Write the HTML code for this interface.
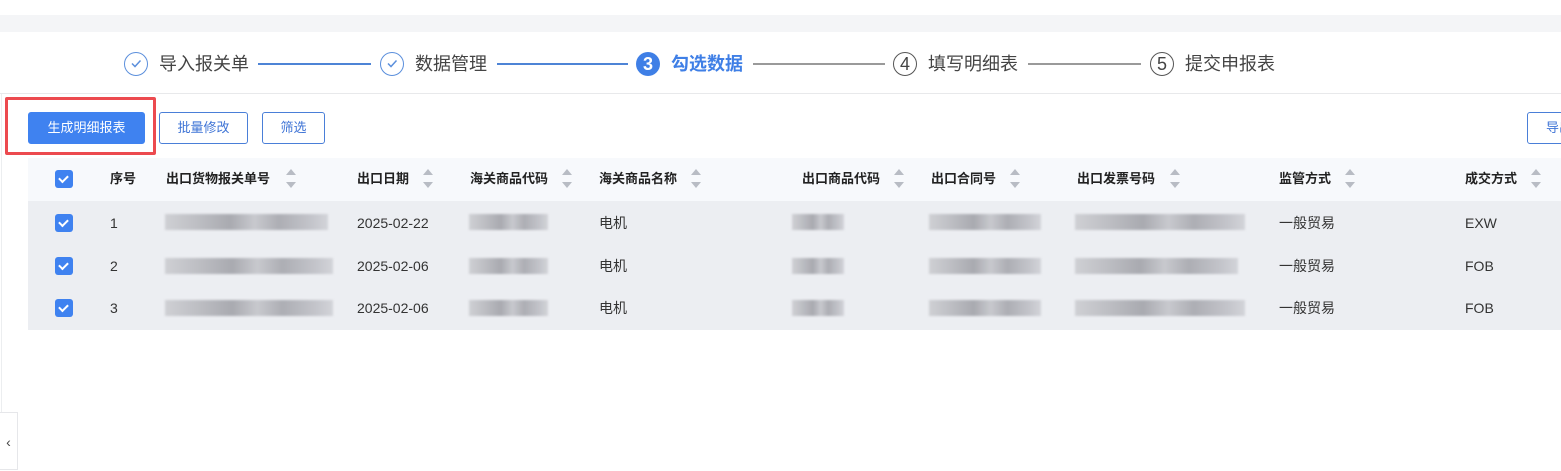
<!DOCTYPE html>
<html><head><meta charset="utf-8"><style>
*{margin:0;padding:0;box-sizing:border-box}
body{width:1561px;height:470px;background:#fff;position:relative;overflow:hidden;font-family:"Liberation Sans","Noto Sans CJK SC",sans-serif;color:#333}
.a{position:absolute}
.st{position:absolute;top:52px;font-size:18px;line-height:24px;color:#444}
.ln{position:absolute;top:63px;height:2px}
.ci{position:absolute;top:52px;width:24px;height:24px;border-radius:50%;text-align:center;font-size:18px;line-height:22px}
.btn{position:absolute;top:112px;height:32px;border:1px solid #4a7fd8;border-radius:3px;color:#3f74d6;font-size:13px;line-height:30px;text-align:center;background:#fff}
.h{position:absolute;top:171px;font-size:13px;font-weight:bold;color:#222;line-height:16px}
.so{position:absolute;top:169px;width:10px;height:20px}
.so:before{content:"";position:absolute;left:0;top:0;border:5px solid transparent;border-bottom:6px solid #b8bcc4;border-top:0}
.so:after{content:"";position:absolute;left:0;top:13px;border:5px solid transparent;border-top:6px solid #b8bcc4;border-bottom:0}
.cb{position:absolute;left:55px;width:18px;height:18px;border-radius:3px;background:#3f82f0}
.cb:after{content:"";position:absolute;width:7px;height:4px;border-left:2px solid #fff;border-bottom:2px solid #fff;transform:rotate(-45deg);top:5px;left:4px}
.c{position:absolute;font-size:14px;color:#333;line-height:18px}
.bl{position:absolute;height:16px;background:linear-gradient(90deg,#cfd0d4,#bdbec3 20%,#a9aab0 40%,#c8c9ce 55%,#adaeb4 70%,#c4c5cb 90%,#d3d4d9);filter:blur(1px)}
</style></head><body>
<div class="a" style="left:0;top:15px;width:1561px;height:17px;background:#f4f5f7"></div>
<div class="a" style="left:0;top:93px;width:1561px;height:1px;background:#e8e9eb"></div>
<div class="a" style="left:1px;top:94px;width:1px;height:318px;background:#eceef0"></div>
<div class="a" style="left:0;top:412px;width:18px;height:58px;border:1px solid #e6e7ea;border-left:0;background:#fff;font-size:14px;line-height:58px;text-align:center;color:#444">‹</div>

<div class="ci" style="left:124px;border:1.5px solid #5b8fdc"><svg width="21" height="21" viewBox="0 0 21 21"><path d="M6 10.5l3 3 5.5-6" fill="none" stroke="#5b8fdc" stroke-width="1.5"/></svg></div>
<div class="st" style="left:159px">导入报关单</div>
<div class="ln" style="left:258px;width:113px;background:#4e84d6"></div>
<div class="ci" style="left:380px;border:1.5px solid #5b8fdc"><svg width="21" height="21" viewBox="0 0 21 21"><path d="M6 10.5l3 3 5.5-6" fill="none" stroke="#5b8fdc" stroke-width="1.5"/></svg></div>
<div class="st" style="left:415px">数据管理</div>
<div class="ln" style="left:497px;width:131px;background:#4e84d6"></div>
<div class="ci" style="left:636px;background:#3f7fe6;color:#fff;font-weight:bold;line-height:24px">3</div>
<div class="st" style="left:671px;color:#3f7fe6;font-weight:bold">勾选数据</div>
<div class="ln" style="left:753px;width:132px;background:#9a9a9a"></div>
<div class="ci" style="left:893px;border:1.5px solid #555;color:#444">4</div>
<div class="st" style="left:928px">填写明细表</div>
<div class="ln" style="left:1028px;width:113px;background:#9a9a9a"></div>
<div class="ci" style="left:1150px;border:1.5px solid #555;color:#444">5</div>
<div class="st" style="left:1185px">提交申报表</div>

<div class="a" style="left:5px;top:97px;width:151px;height:58px;border:3px solid #ec4a4f;border-radius:2px"></div>
<div class="btn" style="left:28px;width:117px;background:#3f82f0;border-color:#3f82f0;color:#fff">生成明细报表</div>
<div class="btn" style="left:159px;width:89px">批量修改</div>
<div class="btn" style="left:262px;width:63px">筛选</div>
<div class="btn" style="left:1527px;width:50px;text-align:left;padding-left:18px">导出</div>

<div class="a" style="left:28px;top:158px;width:1533px;height:43px;background:#f7f9fc"></div>
<div class="a" style="left:28px;top:201px;width:1533px;height:129px;background:#eceef2"></div>
<div class="cb" style="top:170px"></div>
<div class="h" style="left:110px">序号</div>
<div class="h" style="left:166px">出口货物报关单号</div><div class="so" style="left:286px"></div>
<div class="h" style="left:357px">出口日期</div><div class="so" style="left:423px"></div>
<div class="h" style="left:470px">海关商品代码</div><div class="so" style="left:562px"></div>
<div class="h" style="left:599px">海关商品名称</div><div class="so" style="left:691px"></div>
<div class="h" style="left:802px">出口商品代码</div><div class="so" style="left:894px"></div>
<div class="h" style="left:931px">出口合同号</div><div class="so" style="left:1010px"></div>
<div class="h" style="left:1077px">出口发票号码</div><div class="so" style="left:1170px"></div>
<div class="h" style="left:1279px">监管方式</div><div class="so" style="left:1345px"></div>
<div class="h" style="left:1465px">成交方式</div><div class="so" style="left:1531px"></div>

<div class="cb" style="top:214px"></div><div class="cb" style="top:257px"></div><div class="cb" style="top:299px"></div>
<div class="c" style="left:110px;top:214px">1</div>
<div class="c" style="left:110px;top:257px">2</div>
<div class="c" style="left:110px;top:299px">3</div>
<div class="c" style="left:357px;top:214px">2025-02-22</div>
<div class="c" style="left:357px;top:257px">2025-02-06</div>
<div class="c" style="left:357px;top:299px">2025-02-06</div>
<div class="c" style="left:599px;top:214px">电机</div>
<div class="c" style="left:599px;top:257px">电机</div>
<div class="c" style="left:599px;top:299px">电机</div>
<div class="c" style="left:1279px;top:214px">一般贸易</div>
<div class="c" style="left:1279px;top:257px">一般贸易</div>
<div class="c" style="left:1279px;top:299px">一般贸易</div>
<div class="c" style="left:1465px;top:214px">EXW</div>
<div class="c" style="left:1465px;top:257px">FOB</div>
<div class="c" style="left:1465px;top:299px">FOB</div>

<div class="bl" style="left:165px;top:214px;width:163px"></div>
<div class="bl" style="left:165px;top:258px;width:168px"></div>
<div class="bl" style="left:165px;top:300px;width:168px"></div>
<div class="bl" style="left:469px;top:214px;width:79px"></div>
<div class="bl" style="left:469px;top:258px;width:79px"></div>
<div class="bl" style="left:469px;top:300px;width:79px"></div>
<div class="bl" style="left:792px;top:214px;width:52px"></div>
<div class="bl" style="left:792px;top:258px;width:52px"></div>
<div class="bl" style="left:792px;top:300px;width:52px"></div>
<div class="bl" style="left:929px;top:214px;width:112px"></div>
<div class="bl" style="left:929px;top:258px;width:112px"></div>
<div class="bl" style="left:929px;top:300px;width:112px"></div>
<div class="bl" style="left:1075px;top:214px;width:170px"></div>
<div class="bl" style="left:1075px;top:258px;width:163px"></div>
<div class="bl" style="left:1075px;top:300px;width:170px"></div>
</body></html>
